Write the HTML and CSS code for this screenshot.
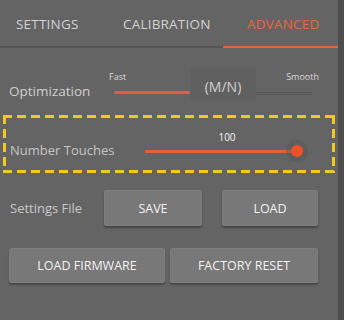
FILE: index.html
```html
<!DOCTYPE html>
<html>
<head>
<meta charset="utf-8">
<link rel="stylesheet" href="styles.css">
</head>
<body>
<div class="app">
  <div class="panel">
    <nav class="tabs">
      <div class="tab tab-settings">SETTINGS</div>
      <div class="tab tab-calib">CALIBRATION</div>
      <div class="tab tab-adv active">ADVANCED</div>
    </nav>

    <div class="opt-row">
      <div class="label opt-label">Optimization</div>
      <div class="opt-slider">
        <div class="mini fast">Fast</div>
        <div class="mn">(M/N)</div>
        <div class="mini smooth">Smooth</div>
        <div class="track-on"></div>
        <div class="track-off"></div>
      </div>
    </div>

    <div class="touches">
      <div class="label touches-label">Number Touches</div>
      <div class="touch-slider">
        <div class="value">100</div>
        <div class="track">
          <div class="fill"></div>
          <div class="thumb"></div>
        </div>
      </div>
    </div>

    <div class="file-row">
      <div class="label file-label">Settings File</div>
      <button class="btn btn-save">SAVE</button>
      <button class="btn btn-load">LOAD</button>
    </div>

    <div class="fw-row">
      <button class="btn btn-fw">LOAD FIRMWARE</button>
      <button class="btn btn-reset">FACTORY RESET</button>
    </div>
  </div>
  <div class="edge"></div>
</div>
</body>
</html>
```

FILE: styles.css
```css
* { box-sizing: border-box; }
html, body { margin: 0; padding: 0; }
body {
  width: 344px;
  height: 320px;
  background: #646464;
  font-family: "Open Sans", "DejaVu Sans", sans-serif;
  overflow: hidden;
}
.app {
  display: flex;
  width: 344px;
  height: 320px;
}
.panel {
  width: 338px;
  height: 320px;
  background: #646464;
}
.edge {
  width: 6px;
  height: 320px;
  background: #4d4d4d;
}

/* tabs */
.tabs {
  display: flex;
  height: 48px;
}
.tab {
  height: 48px;
  padding-top: 15px;
  font-size: 13.5px;
  color: #d2d2d2;
  border-bottom: 2px solid #555555;
  letter-spacing: 0.2px;
}
.tab-settings { width: 107px; padding-left: 16px; }
.tab-calib { width: 116px; padding-left: 16px; }
.tab-adv { width: 115px; padding-left: 24px; }
.tab.active {
  color: #e8663e;
  border-bottom-color: #e5643c;
}

.label {
  color: #cfcfcf;
  font-size: 13.5px;
}

/* optimization */
.opt-row {
  display: flex;
  align-items: flex-end;
  margin-top: 20px;
  height: 32px;
  padding-left: 9px;
}
.opt-label {
  width: 100px;
  line-height: 18px;
  margin-bottom: 0;
}
.opt-slider {
  display: grid;
  grid-template-columns: 81px 66px 56px;
  grid-template-rows: 22px 10px;
}
.mini {
  font-size: 9px;
  color: #d8d8d8;
  line-height: 12px;
  padding-top: 3px;
}
.fast { grid-column: 1; grid-row: 1; }
.smooth { grid-column: 3; grid-row: 1; text-align: right; margin-right: -7px; }
.mn {
  grid-column: 2;
  grid-row: 1 / 3;
  background: #606060;
  color: #d0d0d0;
  font-size: 14px;
  display: flex;
  align-items: center;
  justify-content: center;
  padding-top: 4px;
}
.track-on {
  grid-column: 1;
  grid-row: 2;
  margin-left: 5px;
  height: 3px;
  margin-top: 1px;
  background: #e2603a;
  border-radius: 2px;
}
.track-off {
  grid-column: 3;
  grid-row: 2;
  height: 3px;
  margin-top: 2px;
  border-top: 1px solid #555;
  border-bottom: 1px solid #555;
}

/* number touches */
.touches {
  margin: 15px 0 0 3px;
  width: 332px;
  height: 58px;
  display: flex;
  align-items: center;
  padding-left: 7px;
  background:
    repeating-linear-gradient(90deg, #f0cb1e 0 9px, transparent 9px 14px) left top / 100% 3px no-repeat,
    repeating-linear-gradient(90deg, #f0cb1e 0 9px, transparent 9px 14px) left bottom / 100% 3px no-repeat,
    repeating-linear-gradient(180deg, #f0cb1e 0 9px, transparent 9px 14px) left top / 3px 100% no-repeat,
    repeating-linear-gradient(180deg, #f0cb1e 0 9px, transparent 9px 14px) right top / 3px 100% no-repeat;
}
.touches-label {
  width: 135px;
  color: #c4c4c4;
  font-size: 13px;
  padding-top: 12px;
}
.touch-slider {
  width: 160px;
  display: flex;
  flex-direction: column;
  margin-top: -2px;
}
.value {
  font-size: 10px;
  color: #f4f4f4;
  text-align: center;
  padding-left: 4px;
  line-height: 12px;
  margin-bottom: 5px;
}
.track {
  position: relative;
  height: 8px;
}
.fill {
  position: absolute;
  left: 0;
  right: 8px;
  top: 2px;
  height: 3px;
  background: #e2603a;
  border-radius: 2px;
}
.thumb {
  position: absolute;
  right: 2px;
  top: -3px;
  width: 12px;
  height: 12px;
  border-radius: 50%;
  background: #ee5128;
  box-shadow: 0 0 0 5px rgba(80,80,80,0.35);
}

/* buttons */
.btn {
  font-family: inherit;
  border: 1px solid #7e7e7e;
  background: #787878;
  color: #f2f2f2;
  font-size: 12.5px;
  border-radius: 2px;
  box-shadow: 0 2px 2px rgba(0,0,0,0.3);
  padding: 0;
  display: flex;
  align-items: center;
  justify-content: center;
}
.file-row {
  display: flex;
  align-items: center;
  margin-top: 17px;
  padding-left: 10px;
}
.file-label {
  width: 94px;
  color: #c8c8c8;
  font-size: 13px;
}
.btn-save { width: 98px; height: 36px; }
.btn-load { width: 96px; height: 36px; margin-left: 20px; }

.fw-row {
  display: flex;
  margin-top: 22px;
  padding-left: 9px;
  gap: 5px;
}
.btn-fw { width: 156px; height: 35px; }
.btn-reset { width: 148px; height: 35px; }
```
